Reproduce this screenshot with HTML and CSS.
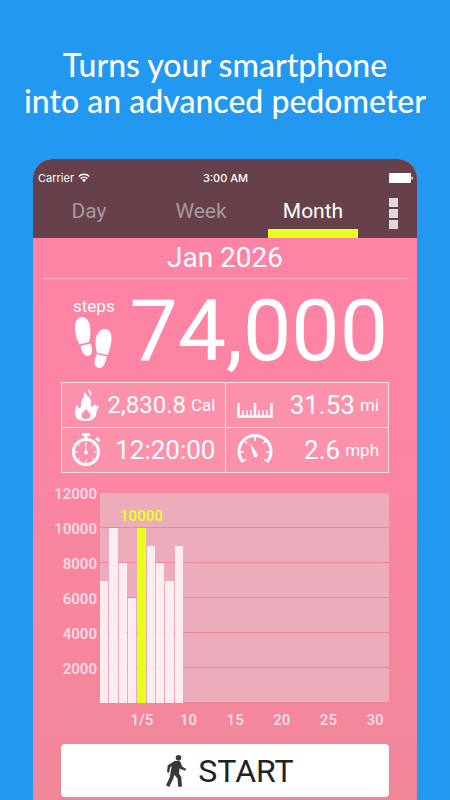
FILE: index.html
```html
<!DOCTYPE html>
<html lang="en">
<head>
    <meta charset="UTF-8">
    <meta name="viewport" content="width=device-width, initial-scale=1.0">
    <title>Pedometer</title>
    <link rel="stylesheet" href="styles.css">
</head>
<body>
    <h1 class="headline">Turns your smartphone<br>into an advanced pedometer</h1>

    <main class="phone">
        <header class="top">
            <!-- Status bar -->
            <div class="status-bar">
                <span class="carrier">Carrier
                    <svg class="wifi" viewBox="0 0 24 18" aria-hidden="true">
                        <path d="M1.5 6a15 15 0 0 1 21 0M5.2 10.2a10 10 0 0 1 13.600 0" fill="none" stroke="currentColor" stroke-width="3"/>
                        <path d="M8 13a5.500 5.500 0 0 1 8 0l-4 4.500z" fill="currentColor"/>
                    </svg>
                </span>
                <span class="clock">3:00 AM</span>
                <svg class="battery" viewBox="0 0 24 10" aria-hidden="true">
                    <rect x="0" y="0" width="22" height="10" rx="1"/>
                    <path d="M22.5 3.5a1.500 1.500 0 0 1 0 3z"/>
                </svg>
            </div>

            <nav class="tabs">
                <button type="button" class="tab">Day</button>
                <button type="button" class="tab">Week</button>
                <button type="button" class="tab active">Month</button>
                <button type="button" class="menu" aria-label="Menu">
                    <i></i><i></i><i></i>
                </button>
            </nav>
        </header>

        <h2 class="period">Jan 2026</h2>

        <section class="total">
            <div class="total-label">
                <span>steps</span>
                <svg class="feet" viewBox="0 0 40 52" aria-hidden="true">
                    <path d="M9 0c5.500 0 8 6 8.300 12 .3 5-.2 9-1.300 13L6.500 27.500C4 22 1.800 17 2 10 2 4 4.800 0 9 0z"/>
                    <path d="M7.500 29l9.800-2.500c1.400 2.500 2.200 5 1.700 8-.5 2.800-2.300 4.500-4.300 4.500-4 0-5.700-4.500-7.200-10z"/>
                    <path d="M32 12c4.700 0 6.700 4.500 6.500 10.500-.3 6-2 10.500-4 15.500l-10.500-2.300C22.800 31 22 27 22.800 22c.8-5.500 4.200-10 9.200-10z"/>
                    <path d="M23.500 37l10.300 2.600c-1.300 6.500-3.300 11.400-7.300 11.400-3 0-5-2.400-4.800-6 .1-2.800.8-5.500 1.800-8z"/>
                </svg>
            </div>
            <strong class="total-value">74,000</strong>
        </section>

        <section class="stats">
            <div class="stat">
                <svg class="icon" viewBox="0 0 32 36" aria-hidden="true">
                    <path fill-rule="evenodd" d="M14 4c2 5 7 6 7 10.500 0 3-1 5 1 5 1.500 0 2-1 2-3 1 1.500 1.500 2.500 3.500 2.500.5 0 1-.2 1.500-.5-.5 3-2.500 4-2.500 7 0 5.500-4.500 8.500-11 8.500S5 31 5 26c0-3 1-5 1-8 2 1 2 3 3.500 3 2 0 1.200-3 1.700-5.500.6-4 3.800-5.500 2.800-11.500zM16 21.500c-1 3-4.500 4-4.500 7 0 2.200 1.800 3.500 4.500 3.500s4.500-1.300 4.500-3.500c0-3-3.500-4-4.500-7z"/>
                    <path d="M18.500 2c-1.500 3.500 2.500 4 1.500 7.500 3-3 .5-4.500-1.500-7.500z"/>
                </svg>
                <span class="value small">2,830.8</span><span class="unit">Cal</span>
            </div>
            <div class="stat">
                <svg class="icon wide" viewBox="0 0 36 36" aria-hidden="true">
                    <path d="M1.500 16v13.500h33V16M18 16v13" fill="none" stroke="currentColor" stroke-width="2.500"/>
                    <path d="M6 23v6M10 23v6M14 23v6M22 23v6M26 23v6M30 23v6" stroke="currentColor" stroke-width="1.500"/>
                </svg>
                <span class="value">31.53</span><span class="unit">mi</span>
            </div>
            <div class="stat">
                <svg class="icon" viewBox="0 0 32 36" aria-hidden="true">
                    <circle cx="16" cy="20" r="12.500" fill="none" stroke="currentColor" stroke-width="3"/>
                    <path d="M12 1h8v3h-2.500v4h-3V4H12zM25 7l2-2 3.500 3-2 2z"/>
                    <path d="M16 10v10M16 28v3M5 20h3M24 20h3M8.200 12.200l2 2M8.200 27.800l2-2M23.800 27.800l-2-2M23.800 12.200l-2 2" stroke="currentColor" stroke-width="1"/>
                    <circle cx="16" cy="20.500" r="2"/>
                </svg>
                <span class="value">12:20:00</span>
            </div>
            <div class="stat">
                <svg class="icon wide" viewBox="0 0 36 36" aria-hidden="true">
                    <path d="M6 30a16 16 0 1 1 24 0" fill="none" stroke="currentColor" stroke-width="3"/>
                    <path d="M5 29.500l4-2M31 29.500l-4-2M2 20h5M34 20h-5M18 4v5M7 8.500l3 3M29 8.500l-3 3" stroke="currentColor" stroke-width="1.500"/>
                    <path d="M13 11l7.500 11c1.500 2.500-2.500 4.500-4 2z"/>
                </svg>
                <span class="value">2.6</span><span class="unit">mph</span>
            </div>
        </section>

        <!-- Steps per day of the month, bar height is the share of 12000 -->
        <section class="chart">
            <div class="y-axis">
                <span>12000</span>
                <span>10000</span>
                <span>8000</span>
                <span>6000</span>
                <span>4000</span>
                <span>2000</span>
            </div>
            <div class="plot">
                <div class="bar" style="height: calc(100% * 7 / 12)"></div>
                <div class="bar" style="height: calc(100% * 10 / 12)"></div>
                <div class="bar" style="height: calc(100% * 8 / 12)"></div>
                <div class="bar" style="height: calc(100% * 6 / 12)"></div>
                <div class="bar selected" style="height: calc(100% * 10 / 12)"><span class="bar-label">10000</span></div>
                <div class="bar" style="height: calc(100% * 9 / 12)"></div>
                <div class="bar" style="height: calc(100% * 8 / 12)"></div>
                <div class="bar" style="height: calc(100% * 7 / 12)"></div>
                <div class="bar" style="height: calc(100% * 9 / 12)"></div>
            </div>
            <div class="x-axis">
                <span class="day-5">1/5</span>
                <span class="day-10">10</span>
                <span class="day-15">15</span>
                <span class="day-20">20</span>
                <span class="day-25">25</span>
                <span class="day-30">30</span>
            </div>
        </section>

        <button type="button" class="start">
            <svg class="walker" viewBox="0 0 20 32" aria-hidden="true">
                <circle cx="12.500" cy="2.800" r="2.800"/>
                <path d="M8.500 6h4c1.200 0 1.900.7 2.300 1.700l1.500 4.100 3.200 1.800c1 .6.400 2.200-.8 1.900L14.300 14l-.6-1-.7 5.500 2.300 3.500.6 9.800h-3.700l-.7-8.300-3.300-3.800-1 4L3.200 32 0 30.200l3.700-7.700L5.700 11l-1.500 1.200-.8 4.600c-.4 1.400-2.400 1.100-2.300-.4l.6-6z"/>
            </svg>
            START
        </button>
    </main>
</body>
</html>
```

FILE: styles.css
```css
* {
    box-sizing: border-box;
}

body {
    margin: 0;
    min-height: 100vh;
    display: flex;
    flex-direction: column;
    background-color: #2298f1;
    color: #ffffff;
    font-family: Roboto, "Liberation Sans", sans-serif;
}

button {
    border: none;
    padding: 0;
    background: none;
    color: inherit;
    font-family: inherit;
    cursor: pointer;
}

svg {
    fill: currentColor;
}

.headline {
    margin: 47px 0 40px;
    font-family: Lato, sans-serif;
    font-size: 32px;
    font-weight: 500;
    line-height: 36px;
    text-align: center;
    white-space: nowrap;
}

/* Phone screen */
.phone {
    flex: 1;
    margin: 0 33px;
    border-radius: 20px 20px 0 0;
    overflow: hidden;
    background: linear-gradient(#ff82a5, #fd84a4 40%, #f08799);
}

.top {
    background-color: #66414a;
}

.status-bar {
    display: grid;
    grid-template-columns: 1fr auto 1fr;
    align-items: center;
    padding: 12px 4px 0 5px;
    font-family: Inter, sans-serif;
    font-size: 11px;
    line-height: 14px;
}

.carrier {
    display: flex;
    align-items: center;
    gap: 4px;
}

.wifi {
    width: 12px;
    height: 10px;
}

.clock {
    font-weight: 500;
}

.battery {
    justify-self: end;
    width: 24px;
    height: 10px;
}

.tabs {
    display: flex;
    height: 53px;
}

.tab {
    flex: 1;
    display: flex;
    flex-direction: column;
    align-items: center;
    justify-content: space-between;
    padding-top: 12px;
    color: #a69a9b;
    font-size: 21px;
    line-height: 28px;
}

.tab.active {
    color: #ffffff;
}

.tab.active::after {
    content: "";
    width: 90px;
    height: 9px;
    background-color: #e9ff20;
}

.menu {
    width: 48px;
    display: flex;
    flex-direction: column;
    align-items: center;
    gap: 2px;
    padding-top: 13px;
}

.menu i {
    width: 9px;
    height: 9px;
    background-color: #e0d9db;
}

.period {
    margin: 0 9px;
    border-bottom: 1px solid #ffb0c6;
    font-size: 28px;
    font-weight: 400;
    line-height: 40px;
    text-align: center;
}

/* Step total */
.total {
    display: flex;
    justify-content: space-between;
    padding: 0 29px 0 40px;
    height: 103px;
}

.total-label {
    padding-top: 16px;
    font-size: 17px;
    line-height: 22px;
}

.feet {
    display: block;
    width: 40px;
    height: 52px;
}

.total-value {
    font-size: 86px;
    font-weight: 400;
    line-height: 103px;
}

/* Stats grid */
.stats {
    display: grid;
    grid-template-columns: 1fr 1fr;
    gap: 1px;
    margin: 0 28px;
    border: 1px solid #ffe0e8;
    background-color: #ffe0e8;
}

.stat {
    display: flex;
    align-items: center;
    height: 44px;
    padding: 0 9px 0 8px;
    background-color: #fc91ac;
}

.icon {
    width: 32px;
    height: 36px;
}

.icon.wide {
    width: 36px;
    margin-left: 3px;
}

.value {
    margin-left: auto;
    font-size: 26px;
    line-height: 32px;
}

.value.small {
    font-size: 24px;
}

.unit {
    margin-left: 5px;
    font-size: 17px;
    line-height: 32px;
}

/* Chart */
.chart {
    display: grid;
    grid-template-columns: 36px 1fr;
    column-gap: 3px;
    margin: 4px 28px 0;
    font-size: 15px;
    font-weight: 600;
    color: #ffd9e2;
}

.y-axis {
    display: flex;
    flex-direction: column;
    align-items: flex-end;
    line-height: 35px;
}

.plot,
.x-axis {
    display: grid;
    grid-template-columns: repeat(31, 1fr);
}

.plot {
    height: 210px;
    margin-top: 16px;
    align-items: end;
    background: repeating-linear-gradient(#edacbc 0 34px, #f3839f 34px 35px);
}

.bar {
    position: relative;
    margin-right: 1px;
    background-color: #fdedf0;
}

.bar.selected {
    background-color: #e9ff20;
}

.bar-label {
    position: absolute;
    bottom: 100%;
    left: 50%;
    transform: translateX(-50%);
    color: #e9ff20;
    line-height: 24px;
}

.x-axis {
    grid-column: 2;
    justify-items: center;
    line-height: 34px;
}

.day-5 {
    grid-column: 4 / span 3;
}

.day-10 {
    grid-column: 9 / span 3;
}

.day-15 {
    grid-column: 14 / span 3;
}

.day-20 {
    grid-column: 19 / span 3;
}

.day-25 {
    grid-column: 24 / span 3;
}

.day-30 {
    grid-column: 29 / span 3;
}

/* Start button */
.start {
    display: flex;
    align-items: center;
    justify-content: center;
    gap: 12px;
    width: calc(100% - 56px);
    height: 53px;
    margin: 7px 28px 3px;
    padding-left: 10px;
    border-radius: 4px;
    background-color: #ffffff;
    color: #222222;
    font-size: 32px;
}

.walker {
    width: 20px;
    height: 32px;
    color: #383838;
}
```
